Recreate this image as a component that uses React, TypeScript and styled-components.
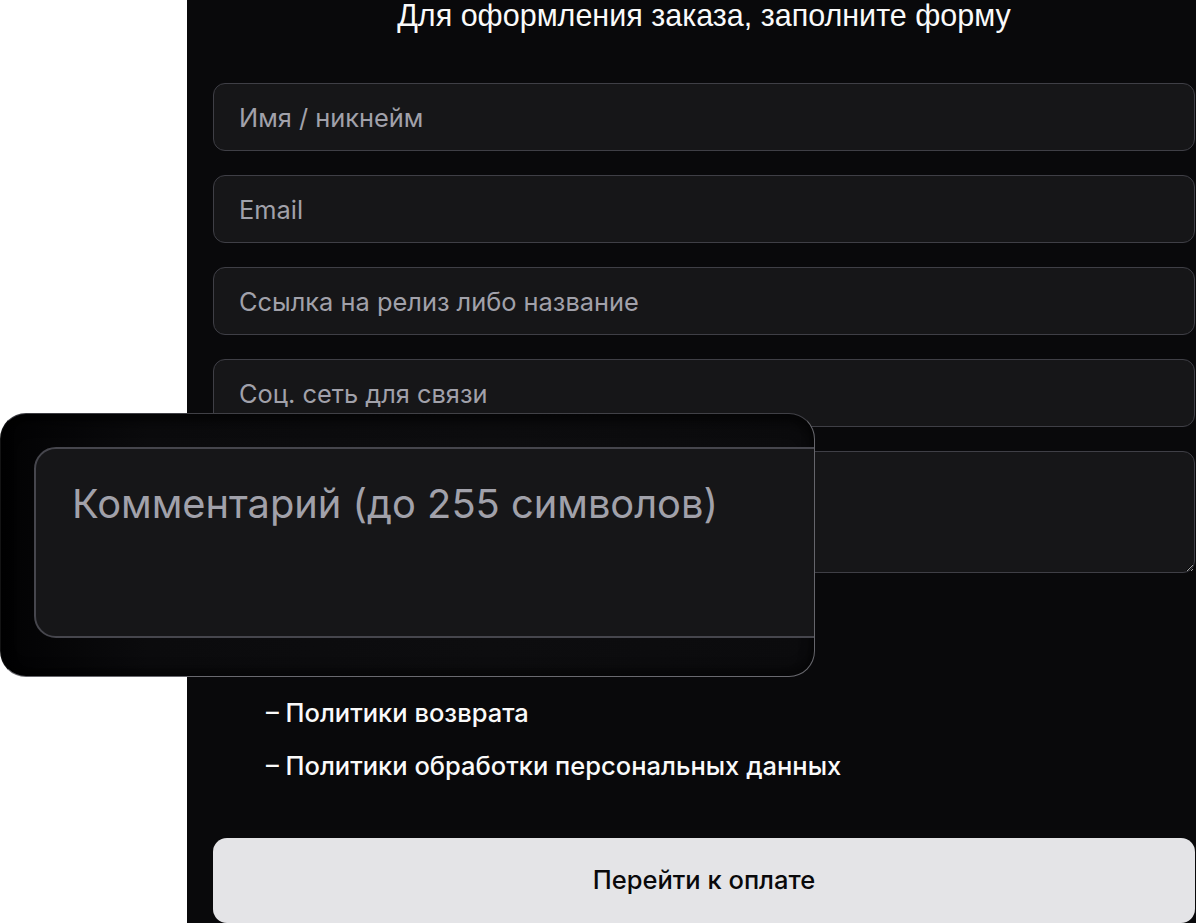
import React from "react";
import styled, { createGlobalStyle } from "styled-components";

const GlobalStyle = createGlobalStyle`
  html, body {
    margin: 0;
    padding: 0;
    background: #ffffff;
    overflow: hidden;
  }
  * { box-sizing: border-box; }
`;

const Page = styled.div`
  position: relative;
  display: flex;
  width: 1196px;
  height: 923px;
  overflow: hidden;
  background: #ffffff;
`;

const Gutter = styled.div`
  flex: 0 0 187px;
  background: #ffffff;
`;

const Panel = styled.main`
  flex: 1;
  display: flex;
  flex-direction: column;
  background: #09090b;
  padding: 0 1px 0 26px;
`;

const Title = styled.h1`
  margin: 0;
  font-family: "Liberation Sans", Arial, sans-serif;
  font-weight: 400;
  font-size: 30.5px;
  line-height: 30px;
  color: #fafafa;
  text-align: center;
`;

const Form = styled.form`
  display: flex;
  flex-direction: column;
  gap: 24px;
  margin-top: 53px;
`;

const Field = styled.input`
  height: 68px;
  width: 100%;
  padding: 0 25px;
  border: 1px solid #3f3f46;
  border-radius: 12px;
  background: #161618;
  font-family: Inter, "Noto Sans", sans-serif;
  font-size: 25.4px;
  color: #f4f4f5;
  outline: none;
  &::placeholder {
    color: #a1a1aa;
  }
`;

const Comment = styled.textarea`
  height: 122px;
  width: 100%;
  padding: 18px 25px;
  border: 1px solid #3f3f46;
  border-radius: 12px;
  background: #161618;
  font-family: Inter, "Noto Sans", sans-serif;
  font-size: 25.4px;
  color: #f4f4f5;
  color-scheme: dark;
  outline: none;
  &::placeholder {
    color: #a1a1aa;
  }
`;

const PolicyList = styled.ul`
  list-style: none;
  margin: 124px 0 0;
  padding: 0 0 0 53px;
  display: flex;
  flex-direction: column;
  gap: 21px;
`;

const PolicyItem = styled.li`
  font-family: Inter, "Noto Sans", sans-serif;
  font-weight: 500;
  font-size: 25.5px;
  line-height: 32px;
  color: #fafafa;
`;

const PayButton = styled.button`
  margin-top: 56px;
  height: 90px;
  width: 100%;
  border: none;
  border-radius: 14px;
  background: #e4e4e7;
  font-family: Inter, "Noto Sans", sans-serif;
  font-weight: 500;
  font-size: 25.5px;
  color: #09090b;
  padding-bottom: 4px;
`;

const Lens = styled.div`
  position: absolute;
  left: 0;
  top: 413px;
  width: 815px;
  height: 264px;
  border-radius: 26px;
  overflow: hidden;
  background: linear-gradient(90deg, #020203 0%, #0b0b0d 18%, #0d0d0f 60%, #0b0b0d 100%);
  border: 1.5px solid rgba(170, 170, 178, 0.6);
  border-left-color: rgba(20, 20, 22, 0.9);
  border-top-color: rgba(120, 120, 128, 0.5);
  box-shadow: inset 0 8px 14px rgba(0, 0, 0, 0.6), inset 0 -6px 12px rgba(0, 0, 0, 0.45);
  padding: 33px 0 0 33px;
`;

const LensField = styled.div`
  width: 1100px;
  height: 191px;
  border: 2px solid #46464d;
  border-radius: 22px;
  background: #161618;
  padding: 29px 0 0 36px;
  font-family: Inter, "Noto Sans", sans-serif;
  font-size: 39.8px;
  line-height: 52px;
  color: #a1a1aa;
`;

export default function App() {
  return (
    <>
      <GlobalStyle />
      <Page>
        <Gutter />
        <Panel>
          <Title>Для оформления заказа, заполните форму</Title>
          <Form onSubmit={(e) => e.preventDefault()}>
            <Field placeholder="Имя / никнейм" />
            <Field placeholder="Email" type="email" />
            <Field placeholder="Ссылка на релиз либо название" />
            <Field placeholder="Соц. сеть для связи" />
            <Comment placeholder="Комментарий (до 255 символов)" />
          </Form>
          <PolicyList>
            <PolicyItem>– Политики возврата</PolicyItem>
            <PolicyItem>– Политики обработки персональных данных</PolicyItem>
          </PolicyList>
          <PayButton type="button">Перейти к оплате</PayButton>
        </Panel>
        <Lens aria-hidden="true">
          <LensField>Комментарий (до 255 символов)</LensField>
        </Lens>
      </Page>
    </>
  );
}
